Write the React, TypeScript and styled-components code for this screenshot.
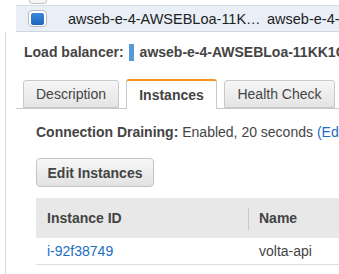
import { createGlobalStyle } from "styled-components";
import styled from "styled-components";

const GlobalStyle = createGlobalStyle`
  html, body {
    margin: 0;
    padding: 0;
    background: #fff;
    overflow: hidden;
  }
  body {
    font-family: "Liberation Sans", Arial, sans-serif;
    color: #444;
    font-size: 14px;
  }
`;

const Page = styled.div`
  width: 339px;
  height: 274px;
  overflow: hidden;
`;

const PrevRow = styled.div`
  height: 5px;
  margin-left: 16px;
  border-bottom: 1px solid #d6dde5;
  position: relative;
`;

const PrevCheck = styled.div`
  position: absolute;
  left: 13px;
  top: -12px;
  width: 16px;
  height: 14px;
  border: 1px solid #c4c4c4;
  border-radius: 3px;
  background: #f4f4f4;
`;

const SelectedRow = styled.div`
  display: flex;
  align-items: center;
  height: 25px;
  margin-left: 16px;
  background: #e8eff7;
  border-bottom: 1px solid #cfd6de;
  white-space: nowrap;
  font-size: 14.5px;
  color: #222;
`;

const Check = styled.div`
  flex-shrink: 0;
  width: 19px;
  height: 17px;
  margin-left: 12px;
  box-sizing: border-box;
  border: 1px solid #b7bcc2;
  border-radius: 4px;
  background: #fff;
  display: flex;
  align-items: center;
  justify-content: center;
  &::after {
    content: "";
    width: 13px;
    height: 12px;
    border-radius: 2px;
    background: linear-gradient(#3b86d8, #1f66c2);
  }
`;

const Cell = styled.div<{ $w?: number }>`
  flex-shrink: 0;
  width: ${(p) => (p.$w ? `${p.$w}px` : "auto")};
  box-sizing: border-box;
  padding-left: ${(p) => (p.$w ? "21px" : "0")};
  overflow: hidden;
`;

const Panel = styled.div`
  margin-left: 5px;
  border-left: 1px solid #dcdcdc;
  height: 300px;
`;

const LbLine = styled.div`
  display: flex;
  align-items: center;
  padding: 12px 0 0 18px;
  height: 16px;
  font-weight: bold;
  white-space: nowrap;
  font-size: 14px;
`;

const Marker = styled.span`
  flex-shrink: 0;
  display: inline-block;
  width: 5px;
  height: 17px;
  background: #5799d6;
  margin: 0 6px 0 5px;
`;

const Tabs = styled.div`
  display: flex;
  gap: 7px;
  margin: 20px 0 0 10px;
  padding-left: 7px;
  border-bottom: 1px solid #c8c8c8;
  height: 28px;
  align-items: flex-end;
`;

const Tab = styled.div<{ $active?: boolean; $w: number }>`
  flex-shrink: 0;
  width: ${(p) => p.$w}px;
  box-sizing: border-box;
  height: ${(p) => (p.$active ? 30 : 28)}px;
  margin-bottom: ${(p) => (p.$active ? -1 : 0)}px;
  display: flex;
  align-items: center;
  justify-content: center;
  border: 1px solid #c8c8c8;
  border-bottom: ${(p) => (p.$active ? "none" : "1px solid #c8c8c8")};
  border-top: ${(p) => (p.$active ? "2px solid #f7941d" : "1px solid #c8c8c8")};
  border-radius: 3px 3px 0 0;
  background: ${(p) =>
    p.$active ? "#fff" : "linear-gradient(#f6f6f6, #e4e4e4)"};
  font-weight: ${(p) => (p.$active ? "bold" : "normal")};
  font-size: 14px;
  color: #444;
`;

const Body = styled.div`
  padding-left: 30px;
`;

const Draining = styled.div`
  margin-top: 15px;
  white-space: nowrap;
  font-size: 14px;
  line-height: 17px;
  b {
    font-weight: bold;
  }
`;

const Link = styled.span`
  color: #1a6ec4;
`;

const Button = styled.div`
  margin-top: 17px;
  width: 118px;
  height: 29px;
  box-sizing: border-box;
  border: 1px solid #c4c4c4;
  border-radius: 4px;
  background: linear-gradient(#f7f7f7, #e2e2e2);
  display: flex;
  align-items: center;
  justify-content: center;
  font-weight: bold;
  font-size: 14px;
  color: #444;
`;

const Table = styled.div`
  margin-top: 11px;
  white-space: nowrap;
`;

const HeadRow = styled.div`
  display: flex;
  align-items: center;
  height: 40px;
  background: #e8e8e8;
  font-weight: bold;
  font-size: 14px;
`;

const DataRow = styled.div`
  display: flex;
  align-items: center;
  height: 26px;
  border-bottom: 1px solid #dedede;
  font-size: 14px;
`;

const Col = styled.div<{ $w: number; $sep?: boolean }>`
  flex-shrink: 0;
  width: ${(p) => p.$w}px;
  box-sizing: border-box;
  padding-left: 11px;
  align-self: stretch;
  display: flex;
  align-items: center;
  position: relative;
  ${(p) =>
    p.$sep &&
    `&::before {
      content: "";
      position: absolute;
      left: 0;
      top: 10px;
      height: 22px;
      border-left: 1px solid #c8c8c8;
    }`}
`;

export default function App() {
  return (
    <Page>
      <GlobalStyle />
      <PrevRow>
        <PrevCheck />
      </PrevRow>
      <SelectedRow>
        <Check />
        <Cell $w={220}>awseb-e-4-AWSEBLoa-11K…</Cell>
        <Cell>awseb-e-4-AWSEBLoa-11KK1</Cell>
      </SelectedRow>
      <Panel>
        <LbLine>
          Load balancer:
          <Marker />
          awseb-e-4-AWSEBLoa-11KK1C
        </LbLine>
        <Tabs>
          <Tab $w={96}>Description</Tab>
          <Tab $w={91} $active>
            Instances
          </Tab>
          <Tab $w={111}>Health Check</Tab>
        </Tabs>
        <Body>
          <Draining>
            <b>Connection Draining:</b> Enabled, 20 seconds <Link>(Edit)</Link>
          </Draining>
          <Button>Edit Instances</Button>
          <Table>
            <HeadRow>
              <Col $w={212}>Instance ID</Col>
              <Col $w={120} $sep>
                Name
              </Col>
            </HeadRow>
            <DataRow>
              <Col $w={212}>
                <Link>i-92f38749</Link>
              </Col>
              <Col $w={120}>volta-api</Col>
            </DataRow>
          </Table>
        </Body>
      </Panel>
    </Page>
  );
}
